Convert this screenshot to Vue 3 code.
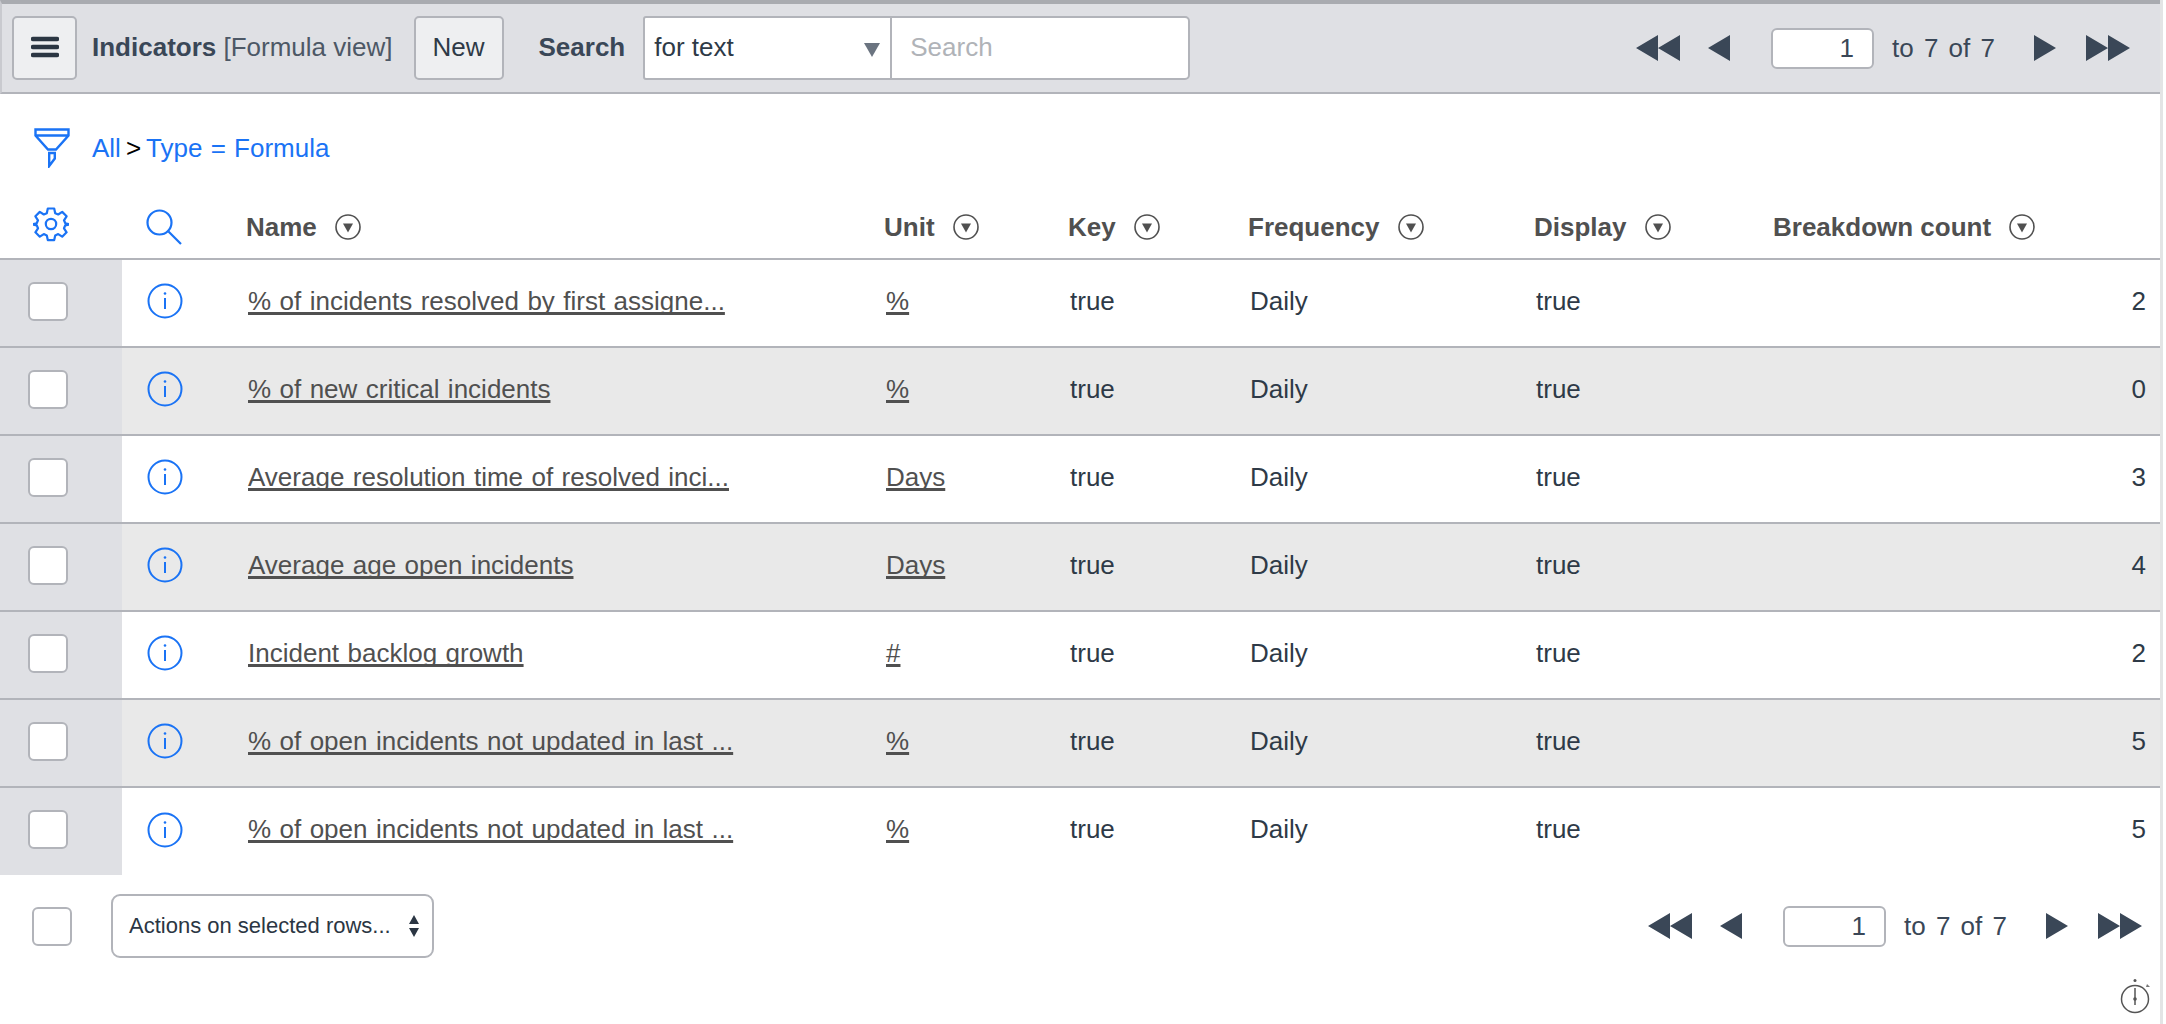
<script setup>
const rows = [
  { name: '% of incidents resolved by first assigne...', unit: '%', count: 2 },
  { name: '% of new critical incidents', unit: '%', count: 0 },
  { name: 'Average resolution time of resolved inci...', unit: 'Days', count: 3 },
  { name: 'Average age open incidents', unit: 'Days', count: 4 },
  { name: 'Incident backlog growth', unit: '#', count: 2 },
  { name: '% of open incidents not updated in last ...', unit: '%', count: 5 },
  { name: '% of open incidents not updated in last ...', unit: '%', count: 5 },
];
const columns = ['Name', 'Unit', 'Key', 'Frequency', 'Display', 'Breakdown count'];
</script>

<template>
  <div class="page">
    <div class="toolbar">
      <button class="btn menu-btn">
        <svg width="28" height="22" viewBox="0 0 28 22"><path d="M2 3h24M2 11h24M2 19h24" stroke="#2b3643" stroke-width="4.400" stroke-linecap="round" fill="none"/></svg>
      </button>
      <div class="title"><b>Indicators</b> [Formula view]</div>
      <button class="btn new-btn">New</button>
      <div class="search-label">Search</div>
      <div class="search-group">
        <div class="search-select">for text<span class="caret"></span></div>
        <div class="search-input">Search</div>
      </div>
      <div class="pager top-pager">
        <svg class="dbl" width="44" height="26" viewBox="0 0 44 26"><path d="M0 13 22 0v26zM22 13 44 0v26z" fill="#3a4757"/></svg>
        <svg class="sgl" width="22" height="26" viewBox="0 0 22 26"><path d="M0 13 22 0v26z" fill="#3a4757"/></svg>
        <div class="page-num">1</div>
        <div class="page-text">to 7 of 7</div>
        <svg class="next" width="22" height="26" viewBox="0 0 22 26"><path d="M22 13 0 0v26z" fill="#3a4757"/></svg>
        <svg class="last" width="44" height="26" viewBox="0 0 44 26"><path d="M22 13 0 0v26zM44 13 22 0v26z" fill="#3a4757"/></svg>
      </div>
    </div>

    <div class="crumbs">
      <svg width="36" height="40" viewBox="0 0 36 40" fill="none" stroke="#1a73f5" stroke-width="2.400">
        <path d="M1.500 1.500h33v6L22 21.500h-8L1.500 7.500zM1.500 7.500h33"/>
        <path d="M15.200 25h5.600v5.500l-5.600 7.500z"/>
      </svg>
      <span class="crumb-link">All</span><span class="crumb-sep">&gt;</span><span class="crumb-link">Type = Formula</span>
    </div>

    <table class="grid">
      <colgroup>
        <col class="c-check"><col class="c-info"><col class="c-name"><col class="c-unit"><col class="c-key"><col class="c-freq"><col class="c-disp"><col>
      </colgroup>
      <thead>
        <tr>
          <th class="icon-th">
            <svg class="gear" width="36" height="36" viewBox="0 0 36 36" fill="none" stroke="#1a73f5" stroke-width="2.200" stroke-linejoin="round">
              <circle cx="18" cy="18" r="5.200"/>
              <path d="M14.800 2.500h6.400l1 4.700 3 1.300 4-2.600 4.400 4.400-2.600 4 1.300 3 4.700 1v.0l0 0-4.700 1-1.300 3 2.600 4-4.400 4.400-4-2.600-3 1.300-1 4.700h-6.400l-1-4.700-3-1.300-4 2.600-4.400-4.400 2.600-4-1.300-3-4.700-1 4.700-1 1.300-3-2.600-4 4.400-4.400 4 2.600 3-1.300z"/>
            </svg>
          </th>
          <th class="icon-th">
            <svg class="lens" width="36" height="36" viewBox="0 0 36 36" fill="none" stroke="#1a73f5" stroke-width="2.200">
              <circle cx="13.500" cy="13.500" r="12"/>
              <path d="M22.500 22.500 35 35"/>
            </svg>
          </th>
          <th v-for="col in columns" :key="col">
            <span class="th-inner">{{ col }}
              <svg width="26" height="26" viewBox="0 0 26 26"><circle cx="13" cy="13" r="12" fill="none" stroke="#505050" stroke-width="1.600"/><path d="M8 9.500h10l-5 9z" fill="#505050"/></svg>
            </span>
          </th>
        </tr>
      </thead>
      <tbody>
        <tr v-for="(row, i) in rows" :key="i" :class="{ alt: i % 2 === 1 }">
          <td class="check-td"><span class="check"></span></td>
          <td class="info-td">
            <svg width="36" height="36" viewBox="0 0 36 36" fill="none" stroke="#1a73f5"><circle cx="18" cy="18" r="16.500" stroke-width="2"/><path d="M18 15v11" stroke-width="2"/><circle cx="18" cy="10.500" r="1.300" fill="#1a73f5" stroke="none"/></svg>
          </td>
          <td><a class="link">{{ row.name }}</a></td>
          <td><a class="link">{{ row.unit }}</a></td>
          <td>true</td>
          <td>Daily</td>
          <td>true</td>
          <td class="count">{{ row.count }}</td>
        </tr>
      </tbody>
    </table>

    <div class="footer">
      <span class="check foot-check"></span>
      <div class="actions">Actions on selected rows...
        <svg width="12" height="22" viewBox="0 0 12 22"><path d="M6 0l5 9H1zM6 22l5-9H1z" fill="#2b3643"/></svg>
      </div>
      <div class="pager foot-pager">
        <svg class="dbl" width="44" height="26" viewBox="0 0 44 26"><path d="M0 13 22 0v26zM22 13 44 0v26z" fill="#3a4757"/></svg>
        <svg class="sgl" width="22" height="26" viewBox="0 0 22 26"><path d="M0 13 22 0v26z" fill="#3a4757"/></svg>
        <div class="page-num">1</div>
        <div class="page-text">to 7 of 7</div>
        <svg class="next" width="22" height="26" viewBox="0 0 22 26"><path d="M22 13 0 0v26z" fill="#3a4757"/></svg>
        <svg class="last" width="44" height="26" viewBox="0 0 44 26"><path d="M22 13 0 0v26zM44 13 22 0v26z" fill="#3a4757"/></svg>
      </div>
    </div>

    <div class="timer-row">
      <svg width="32" height="36" viewBox="0 0 32 36" fill="none" stroke="#555"><circle cx="15" cy="21" r="13.500" stroke-width="1.500"/><circle cx="15" cy="2.500" r="1.500" fill="#555" stroke="none"/><path d="M15 10v17" stroke-width="1.500"/><circle cx="15" cy="21" r="1.800" fill="#555" stroke="none"/><path d="M27 6l3 3-4 0z" fill="#777" stroke="none"/></svg>
    </div>
  </div>
</template>

<style scoped>
.page {
  width: 2160px;
  height: 1024px;
  overflow: hidden;
  font-family: "Liberation Sans", Arial, sans-serif;
  font-size: 26px;
  color: #2e3a47;
  border-right: 3px solid #e3e4e5;
}

.toolbar {
  display: flex;
  align-items: center;
  box-sizing: border-box;
  width: 2160px;
  height: 94px;
  padding: 12px 0 12px 12px;
  background: #dfe0e4;
  border-top: 4px solid #a9abb0;
  border-bottom: 2px solid #b2b4ba;
  border-left: 2px solid #c9cacf;
}

.btn {
  box-sizing: border-box;
  height: 64px;
  background: #eeeff1;
  border: 2px solid #b2b4ba;
  border-radius: 5px;
  font-family: inherit;
  font-size: 26px;
  color: #2e3a47;
  padding: 0 0 2px;
}

.menu-btn {
  width: 65px;
  margin-left: -2px;
  display: flex;
  align-items: center;
  justify-content: center;
}

.title {
  margin: -2px 0 0 15px;
  color: #4d5866;
  white-space: nowrap;
}

.title b {
  color: #3a4757;
}

.new-btn {
  width: 90px;
  margin-left: 21px;
}

.search-label {
  margin: -2px 0 0 35px;
  font-weight: bold;
  color: #3a4757;
}

.search-group {
  display: flex;
  box-sizing: border-box;
  height: 64px;
  width: 547px;
  margin-left: 18px;
  background: #fff;
  border: 2px solid #b2b4ba;
  border-radius: 3px 5px 5px 3px;
}

.search-select {
  position: relative;
  box-sizing: border-box;
  width: 247px;
  padding-left: 9px;
  line-height: 58px;
  color: #2e3a47;
  border-right: 2px solid #b2b4ba;
}

.caret {
  position: absolute;
  right: 10px;
  top: 25px;
  border-top: 14px solid #6b7480;
  border-left: 8px solid transparent;
  border-right: 8px solid transparent;
}

.search-input {
  padding-left: 18px;
  line-height: 58px;
  color: #b0b3b8;
}

.pager {
  display: flex;
  align-items: center;
  color: #3a4757;
}

.top-pager {
  margin-left: auto;
  margin-right: 30px;
}

.sgl {
  margin-left: 28px;
}

.page-num {
  box-sizing: border-box;
  width: 103px;
  height: 41px;
  margin-left: 41px;
  padding-right: 18px;
  text-align: right;
  line-height: 36px;
  background: #fff;
  border: 2px solid #b2b4ba;
  border-radius: 6px;
}

.page-text {
  width: 142px;
  margin-left: 18px;
  word-spacing: 3px;
  white-space: nowrap;
}

.last {
  margin-left: 30px;
}

.crumbs {
  display: flex;
  align-items: center;
  height: 108px;
  padding-left: 34px;
  color: #1a73f5;
  word-spacing: 1px;
}

.crumbs svg {
  margin-right: 22px;
}

.crumb-sep {
  margin: 0 5px;
  color: #000;
}

.grid {
  width: 2160px;
  table-layout: fixed;
  border-collapse: collapse;
}

.c-check { width: 122px; }
.c-info { width: 124px; }
.c-name { width: 638px; }
.c-unit { width: 184px; }
.c-key { width: 180px; }
.c-freq { width: 286px; }
.c-disp { width: 239px; }

th {
  height: 50px;
  padding: 0 0 6px 0;
  text-align: left;
  font-weight: bold;
  color: #505050;
  border-bottom: 2px solid #b2b4ba;
  white-space: nowrap;
}

.th-inner {
  display: inline-flex;
  align-items: center;
  gap: 18px;
}

.icon-th {
  padding: 0 0 6px 0;
}

.gear {
  display: block;
  margin: -6px 0 0 33px;
}

.lens {
  display: block;
  margin: 0 0 0 24px;
}

td {
  box-sizing: border-box;
  height: 88px;
  padding: 0 0 4px 2px;
  border-bottom: 2px solid #b2b4ba;
  color: #2e3a47;
  white-space: nowrap;
}

tbody tr:last-child td {
  border-bottom: none;
}

.alt td {
  background: #e9e9e9;
}

.alt td.check-td, td.check-td {
  background: #dfe0e4;
  padding: 0 0 4px 0;
}

.info-td svg {
  display: block;
  margin-left: 23px;
}

.check {
  display: block;
  box-sizing: border-box;
  width: 40px;
  height: 39px;
  margin-left: 28px;
  background: #fff;
  border: 2px solid #b2b4ba;
  border-radius: 6px;
}

.link {
  color: #505050;
  word-spacing: 1.2px;
  text-decoration: underline;
  text-decoration-thickness: 2.5px;
  text-decoration-skip-ink: none;
}

.count {
  text-align: right;
  padding-right: 14px;
}

.footer {
  display: flex;
  align-items: center;
  height: 84px;
  margin-top: 9px;
}

.foot-check {
  margin-left: 32px;
  flex: none;
}

.actions {
  display: flex;
  align-items: center;
  justify-content: space-between;
  box-sizing: border-box;
  width: 323px;
  height: 64px;
  margin-left: 39px;
  padding: 0 12px 0 16px;
  font-size: 22px;
  color: #2b3643;
  background: #fff;
  border: 2px solid #b2b4ba;
  border-radius: 9px;
}

.foot-pager {
  margin-left: auto;
  margin-right: 18px;
}

.timer-row {
  display: flex;
  justify-content: flex-end;
  padding-right: 8px;
  margin-top: 10px;
}
</style>

<style>
html, body {
  background: #fff;
  overflow: hidden;
}
</style>
